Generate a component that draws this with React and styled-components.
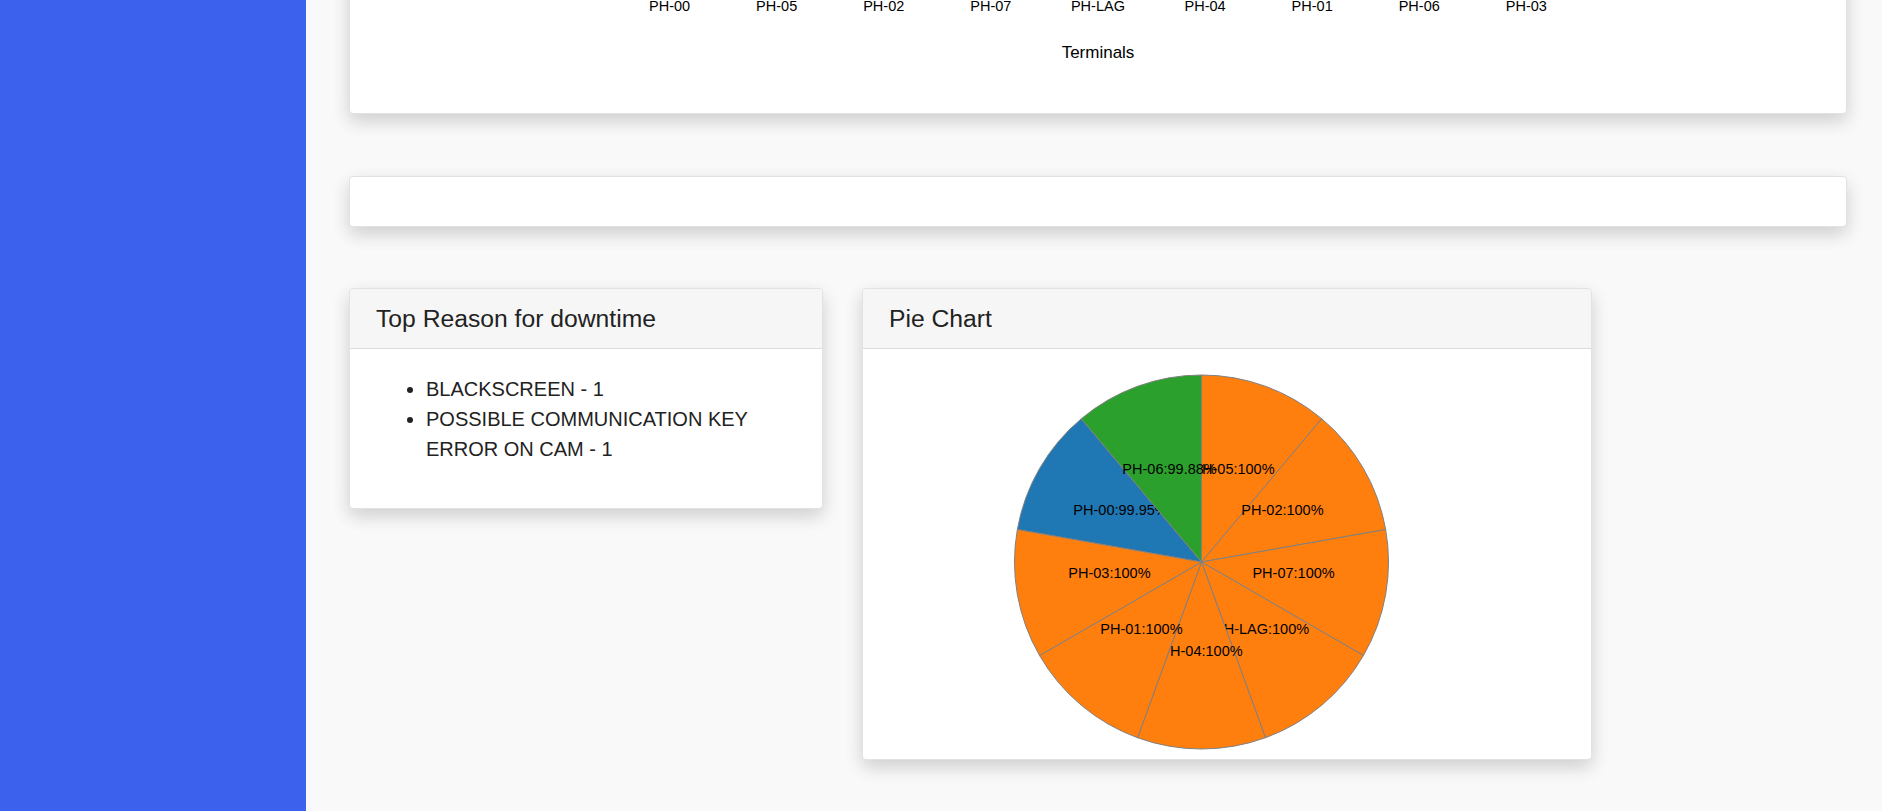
import styled, { createGlobalStyle } from 'styled-components'

const terminals = [
    { name: 'PH-00', value: 99.95 },
    { name: 'PH-05', value: 100 },
    { name: 'PH-02', value: 100 },
    { name: 'PH-07', value: 100 },
    { name: 'PH-LAG', value: 100 },
    { name: 'PH-04', value: 100 },
    { name: 'PH-01', value: 100 },
    { name: 'PH-06', value: 99.88 },
    { name: 'PH-03', value: 100 },
]

const reasons = ['BLACKSCREEN - 1', 'POSSIBLE COMMUNICATION KEY ERROR ON CAM - 1']

const colorFor = (value) => {
    if (value === 100) return '#ff7f0e'
    if (value === 99.95) return '#1f77b4'
    return '#2ca02c'
}

const GlobalStyle = createGlobalStyle`
  *, *::before, *::after {
    box-sizing: border-box;
  }
  body {
    margin: 0;
    background: #f9f9f9;
    font-family: "Liberation Sans", Arial, sans-serif;
    color: #212529;
    overflow: hidden;
  }
`

const Page = styled.div`
  display: flex;
  min-height: 100vh;
`

const Sidebar = styled.aside`
  width: 306px;
  flex-shrink: 0;
  background: #3c61ec;
`

const Main = styled.main`
  flex: 1;
  display: flex;
  flex-direction: column;
  gap: 61.5px;
  padding: 0 35px 0 43px;
`

const Card = styled.div`
  background: #fff;
  border: 1px solid #e2e2e2;
  border-radius: 4px;
  box-shadow: 0 8px 17px 0 rgba(0, 0, 0, 0.1), 0 6px 20px 0 rgba(0, 0, 0, 0.08);
  width: ${(p) => (p.$width ? `${p.$width}px` : 'auto')};
`

const ChartCard = styled(Card)`
  margin-top: -29px;
  display: flex;
  justify-content: center;
`

const EmptyCard = styled(Card)`
  height: 51px;
`

const Row = styled.div`
  display: flex;
  align-items: flex-start;
  gap: 39px;
`

const CardHeader = styled.div`
  background: #f6f6f6;
  border-bottom: 1px solid #dcdcdc;
  border-radius: 4px 4px 0 0;
  padding: 14px 26px;
`

const Title = styled.h3`
  margin: 0;
  font-size: 24.7px;
  font-weight: 400;
  line-height: 31px;
  color: #222;
`

const ListBody = styled.div`
  padding: 25px 26px 44px;
`

const ReasonList = styled.ul`
  margin: 0;
  padding-left: 50px;
  font-size: 20px;
  line-height: 30px;
  color: #222;
`

const PieBody = styled.div`
  padding: 23px 0 7px 148px;

  svg {
    display: block;
  }
`

const SvgText = styled.text`
  font-family: "Liberation Sans", Arial, sans-serif;
  font-size: ${(p) => p.$size}px;
  fill: #000;
`

const AxisChart = () => {
    const band = 107.1
    return (
        <svg width="964" height="141">
            {terminals.map((t, i) => (
                <SvgText key={t.name} $size={14.5} x={band / 2 + i * band} y={39} textAnchor="middle">
                    {t.name}
                </SvgText>
            ))}
            <SvgText $size={17} x={482} y={86} textAnchor="middle">Terminals</SvgText>
        </svg>
    )
}

const PieChart = () => {
    const r = 187
    // slices go clockwise from 12 o'clock, biggest values first
    const order = terminals
        .map((t, i) => ({ ...t, i }))
        .sort((a, b) => b.value - a.value || a.i - b.i)
    const step = (Math.PI * 2) / terminals.length
    const slices = terminals.map((t) => {
        const k = order.findIndex((o) => o.name === t.name)
        const a0 = k * step
        const a1 = a0 + step
        const mid = (a0 + a1) / 2
        const d = `M${r * Math.sin(a0)},${-r * Math.cos(a0)}A${r},${r} 0 0 1 ${r * Math.sin(a1)},${-r * Math.cos(a1)}L0,0Z`
        return { ...t, d, cx: (r / 2) * Math.sin(mid), cy: (-r / 2) * Math.cos(mid) }
    })

    return (
        <svg width="380" height="380">
            <g transform="translate(190.5,190)">
                {slices.map((s) => (
                    <g key={s.name}>
                        <path d={s.d} fill={colorFor(s.value)} stroke="grey" strokeWidth="1" />
                        <SvgText $size={14.5} x={s.cx} y={s.cy} textAnchor="middle">
                            {s.name}:{s.value}%
                        </SvgText>
                    </g>
                ))}
            </g>
        </svg>
    )
}

const App = () => {
    return (
        <Page>
            <GlobalStyle />
            <Sidebar />
            <Main>
                <ChartCard>
                    <AxisChart />
                </ChartCard>
                <EmptyCard />
                <Row>
                    <Card $width={474}>
                        <CardHeader>
                            <Title>Top Reason for downtime</Title>
                        </CardHeader>
                        <ListBody>
                            <ReasonList>
                                {reasons.map((r) => (
                                    <li key={r}>{r}</li>
                                ))}
                            </ReasonList>
                        </ListBody>
                    </Card>
                    <Card $width={730}>
                        <CardHeader>
                            <Title>Pie Chart</Title>
                        </CardHeader>
                        <PieBody>
                            <PieChart />
                        </PieBody>
                    </Card>
                </Row>
            </Main>
        </Page>
    )
}

export default App
